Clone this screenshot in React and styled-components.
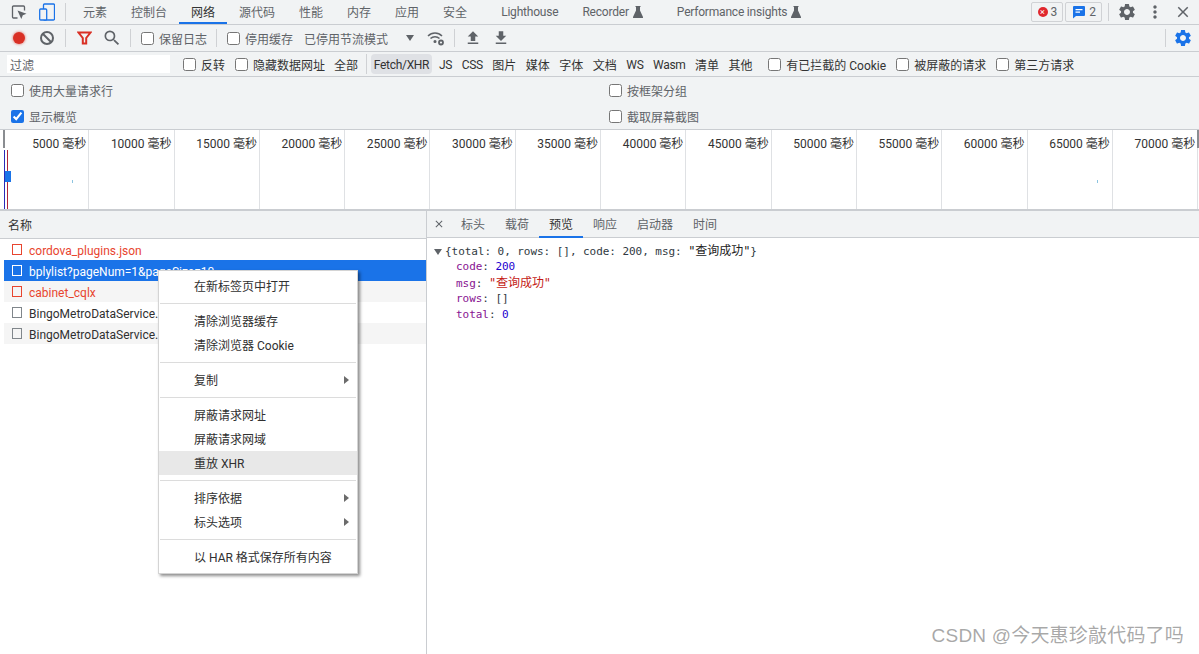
import styled, { createGlobalStyle } from 'styled-components';
import { MdSettings, MdClose, MdSearch, MdMoreVert } from 'react-icons/md';

const uiFont = `Roboto, "Noto Sans CJK SC", sans-serif`;
const borderColor = '#cacdd1';

const panelTabs = ['元素', '控制台', '网络', '源代码', '性能', '内存', '应用', '安全'];
const filterTypes = ['JS', 'CSS', '图片', '媒体', '字体', '文档', 'WS', 'Wasm', '清单', '其他'];
const ticks = [5000, 10000, 15000, 20000, 25000, 30000, 35000, 40000, 45000, 50000, 55000, 60000, 65000, 70000];
const detailTabs = ['标头', '载荷', '预览', '响应', '启动器', '时间'];
const requests = [
	{ name: 'cordova_plugins.json', failed: true },
	{ name: 'bplylist?pageNum=1&pageSize=10', selected: true },
	{ name: 'cabinet_cqlx', failed: true, striped: true },
	{ name: 'BingoMetroDataService.' },
	{ name: 'BingoMetroDataService.', striped: true },
];
const menuGroups = [
	[{ label: '在新标签页中打开' }],
	[{ label: '清除浏览器缓存' }, { label: '清除浏览器 Cookie' }],
	[{ label: '复制', sub: true }],
	[{ label: '屏蔽请求网址' }, { label: '屏蔽请求网域' }, { label: '重放 XHR', hover: true }],
	[{ label: '排序依据', sub: true }, { label: '标头选项', sub: true }],
	[{ label: '以 HAR 格式保存所有内容' }],
];

const isLatin = (text) => /^[A-Za-z/]+$/.test(text);

export default function App() {
	return (
		<>
			<GlobalStyle />
			<Page>
				<Toolbar $height={25}>
					<IconButton>
						<svg width="16" height="16" viewBox="0 0 16 16" fill="none">
							<path d="M6.500 14H2.500A1 1 0 0 1 1.500 13V3a1 1 0 0 1 1-1h10a1 1 0 0 1 1 1v3.500" stroke="#5f6368" strokeWidth="1.300" />
							<path d="M6.500 6.500l9 3.300-3.700 1.500-1.500 3.700z" fill="#5f6368" />
						</svg>
					</IconButton>
					<IconButton>
						<svg width="16" height="18" viewBox="0 0 16 18" fill="none" stroke="#1a73e8" strokeWidth="1.300">
							<rect x="4.500" y="1" width="11" height="16" rx="1" />
							<rect x="0.700" y="6" width="7" height="11" rx="1" fill="#f1f3f4" />
						</svg>
					</IconButton>
					<Divider />
					<Tabs>
						{panelTabs.map((tab) => (
							<PanelTab key={tab} $active={tab === '网络'}>{tab}</PanelTab>
						))}
						<PanelTab $offset={10} $latin>Lighthouse</PanelTab>
						<PanelTab $latin>Recorder<Flask /></PanelTab>
						<PanelTab $offset={10} $latin>Performance insights<Flask /></PanelTab>
					</Tabs>
					<Spacer />
					<Counter>
						<ErrorDot>×</ErrorDot>3
					</Counter>
					<Counter>
						<svg width="14" height="14" viewBox="0 0 14 14">
							<path d="M1 2a1 1 0 0 1 1-1h10a1 1 0 0 1 1 1v8a1 1 0 0 1-1 1H4l-3 2.500z" fill="#1a73e8" />
							<path d="M3.500 4h7v1.200h-7zM3.500 6.500h4.500v1.200H3.500z" fill="#fff" />
						</svg>
						2
					</Counter>
					<Divider $gap={4} />
					<IconButton><MdSettings size={20} color="#5f6368" /></IconButton>
					<IconButton><MdMoreVert size={20} color="#5f6368" /></IconButton>
					<IconButton><MdClose size={18} color="#5f6368" /></IconButton>
					<EndGap />
				</Toolbar>

				<Toolbar $height={27}>
					<IconButton>
						<RecordDot />
					</IconButton>
					<IconButton>
						<svg width="16" height="16" viewBox="0 0 16 16" fill="none" stroke="#5f6368" strokeWidth="2">
							<circle cx="8" cy="8" r="6" />
							<path d="M3.800 3.800l8.400 8.400" />
						</svg>
					</IconButton>
					<Divider />
					<IconButton>
						<svg width="15" height="14" viewBox="0 0 15 14" fill="none">
							<path d="M1.500 1.500h12L9.200 7v5.500H5.800V7z" stroke="#d93025" strokeWidth="2" />
						</svg>
					</IconButton>
					<IconButton><MdSearch size={20} color="#5f6368" /></IconButton>
					<Divider />
					<CheckLabel $left={6} $muted>
						<input type="checkbox" />保留日志
					</CheckLabel>
					<Divider $gap={9} />
					<CheckLabel $left={1} $muted>
						<input type="checkbox" />停用缓存
					</CheckLabel>
					<Throttle>已停用节流模式</Throttle>
					<Caret />
					<IconButton $wide>
						<svg width="18" height="15" viewBox="0 0 18 15" fill="none" stroke="#5f6368" strokeWidth="1.500">
							<path d="M1 5C5 1 11 1 15 5" />
							<path d="M3.500 7.500C6 5 10 5 12.500 7.500" />
							<circle cx="8" cy="10.500" r="0.800" fill="#5f6368" />
							<circle cx="14" cy="11.500" r="2" strokeWidth="1.800" />
						</svg>
					</IconButton>
					<Divider $gap={2} />
					<IconButton $inset>
						<svg width="18" height="18" viewBox="0 0 24 24" fill="#5f6368">
							<path d="M9 16h6v-6h4l-7-7-7 7h4zm-4 2h14v2H5z" />
						</svg>
					</IconButton>
					<IconButton>
						<svg width="18" height="18" viewBox="0 0 24 24" fill="#5f6368">
							<path d="M19 9h-4V3H9v6H5l7 7 7-7zM5 18v2h14v-2H5z" />
						</svg>
					</IconButton>
					<Spacer />
					<Divider $gap={3} />
					<IconButton><MdSettings size={20} color="#1a73e8" /></IconButton>
					<EndGap />
				</Toolbar>

				<FilterBar>
					<FilterInput>过滤</FilterInput>
					<CheckLabel $left={13}>
						<input type="checkbox" />反转
					</CheckLabel>
					<CheckLabel $left={10}>
						<input type="checkbox" />隐藏数据网址
					</CheckLabel>
					<TypeChip $first>全部</TypeChip>
					<Divider $gap={3} $short />
					<TypeChip $active $flush $latin>Fetch/XHR</TypeChip>
					{filterTypes.map((type) => (
						<TypeChip key={type} $latin={isLatin(type)}>{type}</TypeChip>
					))}
					<CheckLabel $left={11}>
						<input type="checkbox" />有已拦截的 Cookie
					</CheckLabel>
					<CheckLabel $left={10}>
						<input type="checkbox" />被屏蔽的请求
					</CheckLabel>
					<CheckLabel $left={10}>
						<input type="checkbox" />第三方请求
					</CheckLabel>
				</FilterBar>

				<Settings>
					<CheckLabel $muted>
						<input type="checkbox" />使用大量请求行
					</CheckLabel>
					<CheckLabel $muted>
						<input type="checkbox" />按框架分组
					</CheckLabel>
					<CheckLabel $muted>
						<input type="checkbox" defaultChecked />显示概览
					</CheckLabel>
					<CheckLabel $muted>
						<input type="checkbox" />截取屏幕截图
					</CheckLabel>
				</Settings>

				<Overview>
					{ticks.map((tick) => (
						<Tick key={tick}>{tick} 毫秒</Tick>
					))}
					<Handle $side="left" />
					<Handle $side="right" />
					<Marker $x={4} $color="#2a2ab8" />
					<Marker $x={7} $color="#b0243a" />
					<Activity />
					<Blip $x={72} $y={180} />
					<Blip $x={1097} $y={180} />
				</Overview>

				<Split>
					<ListPane>
						<ListHeader>名称</ListHeader>
						<Rows>
							{requests.map((req, i) => (
								<Row key={i} $striped={req.striped} $selected={req.selected} $failed={req.failed}>
									<FileIcon />
									<RowName>{req.name}</RowName>
								</Row>
							))}
						</Rows>
					</ListPane>

					<DetailPane>
						<DetailTabs>
							<CloseButton><MdClose size={12} color="#5f6368" /></CloseButton>
							{detailTabs.map((tab) => (
								<DetailTab key={tab} $active={tab === '预览'}>{tab}</DetailTab>
							))}
						</DetailTabs>
						<JsonTree>
							<JsonLine>
								<Twisty />
								{'{total: 0, rows: [], code: 200, msg: '}<Cjk>"查询成功"</Cjk>{'}'}
							</JsonLine>
							<JsonLine $nested><Prop>code</Prop>: <Num>200</Num></JsonLine>
							<JsonLine $nested><Prop>msg</Prop>: <Cjk $string>"查询成功"</Cjk></JsonLine>
							<JsonLine $nested><Prop>rows</Prop>: []</JsonLine>
							<JsonLine $nested><Prop>total</Prop>: <Num>0</Num></JsonLine>
						</JsonTree>
					</DetailPane>
				</Split>

				<Menu>
					{menuGroups.map((group, i) => (
						<MenuGroup key={i}>
							{group.map((item) => (
								<MenuItem key={item.label} $hover={item.hover}>
									{item.label}
									{item.sub && <SubArrow />}
								</MenuItem>
							))}
						</MenuGroup>
					))}
				</Menu>

				<Watermark>CSDN @今天惠珍敲代码了吗</Watermark>
			</Page>
		</>
	);
}

function Flask() {
	return (
		<FlaskIcon width="10" height="12" viewBox="0 0 10 12">
			<path d="M2.500 0h5v1H7v3.500l3 6.500a.7.700 0 0 1-.6 1H.6a.7.700 0 0 1-.6-1l3-6.500V1h-.5z" fill="#5f6368" />
		</FlaskIcon>
	);
}

const GlobalStyle = createGlobalStyle`
	html, body {
		margin: 0;
		padding: 0;
		background: #fff;
		overflow: hidden;
	}
	body {
		font-family: ${uiFont};
		font-size: 12px;
	}
	input[type='checkbox'] {
		width: 13px;
		height: 13px;
		margin: 0;
		accent-color: #1a73e8;
	}
`;

const Page = styled.div`
	position: relative;
	width: 1199px;
	height: 654px;
	display: flex;
	flex-direction: column;
	overflow: hidden;
`;

const Toolbar = styled.div`
	height: ${(p) => p.$height}px;
	box-sizing: border-box;
	display: flex;
	align-items: center;
	padding-left: 5px;
	background: #f1f3f4;
	border-bottom: 1px solid ${borderColor};
	color: #5f6368;
`;

const IconButton = styled.div`
	width: ${(p) => (p.$wide ? 32 : 28)}px;
	height: 24px;
	margin-left: ${(p) => (p.$inset ? 2 : 0)}px;
	flex: none;
	display: flex;
	align-items: center;
	justify-content: center;
`;

const Divider = styled.div`
	width: 1px;
	height: ${(p) => (p.$short ? 20 : 18)}px;
	margin: 0 ${(p) => p.$gap ?? 4}px;
	flex: none;
	background: #cfd1d4;
`;

const Tabs = styled.div`
	display: flex;
	height: 100%;
	margin-left: 1px;
`;

const PanelTab = styled.div`
	height: 100%;
	box-sizing: border-box;
	padding: ${(p) => (p.$latin ? 2 : 0)}px 12px 0;
	margin-left: ${(p) => p.$offset ?? 0}px;
	display: flex;
	align-items: center;
	gap: 4px;
	letter-spacing: ${(p) => (p.$latin ? -0.2 : 0)}px;
	color: ${(p) => (p.$active ? '#333' : '#5f6368')};
	border-bottom: 2px solid ${(p) => (p.$active ? '#1a73e8' : 'transparent')};
	white-space: nowrap;
`;

const FlaskIcon = styled.svg`
	flex: none;
`;

const Spacer = styled.div`
	flex: 1;
`;

const EndGap = styled.div`
	width: 2px;
	flex: none;
`;

const Counter = styled.div`
	height: 20px;
	box-sizing: border-box;
	margin-right: 2px;
	padding: 0 5px 0 6px;
	display: flex;
	align-items: center;
	gap: 3px;
	border: 1px solid #d0d2d5;
	border-radius: 2px;
	color: #5f6368;
`;

const ErrorDot = styled.span`
	width: 10px;
	height: 10px;
	border-radius: 50%;
	display: flex;
	align-items: center;
	justify-content: center;
	background: #e0282e;
	color: #fff;
	font-size: 9px;
	line-height: 1;
`;

const RecordDot = styled.span`
	width: 12px;
	height: 12px;
	border-radius: 50%;
	background: #d93025;
	box-shadow: 0 0 2px 1px rgba(217, 48, 37, 0.35);
`;

const CheckLabel = styled.label`
	display: inline-flex;
	align-items: center;
	gap: 5px;
	margin-left: ${(p) => p.$left ?? 0}px;
	color: ${(p) => (p.$muted ? '#5f6368' : '#333')};
	white-space: nowrap;
`;

const Throttle = styled.div`
	margin-left: 11px;
	color: #5f6368;
	white-space: nowrap;
`;

const Caret = styled.span`
	width: 0;
	height: 0;
	margin-left: 18px;
	margin-right: 6px;
	border-left: 4px solid transparent;
	border-right: 4px solid transparent;
	border-top: 6px solid #5f6368;
`;

const FilterBar = styled.div`
	height: 25px;
	box-sizing: border-box;
	padding-left: 7px;
	display: flex;
	align-items: center;
	background: #f1f3f4;
	border-bottom: 1px solid ${borderColor};
	color: #333;
`;

const FilterInput = styled.div`
	width: 163px;
	height: 18px;
	box-sizing: border-box;
	padding-left: 3px;
	flex: none;
	line-height: 22px;
	background: #fff;
	color: #5f6368;
`;

const TypeChip = styled.div`
	height: 20px;
	box-sizing: border-box;
	padding: ${(p) => (p.$latin ? 2 : 0)}px 3px 0;
	margin: 0 ${(p) => (p.$flush ? 2 : 1.750)}px 0 ${(p) => (p.$first ? 6 : p.$flush ? 1 : 1.750)}px;
	display: flex;
	align-items: center;
	border-radius: 4px;
	letter-spacing: ${(p) => (p.$latin ? -0.3 : 0)}px;
	background: ${(p) => (p.$active ? '#dfe1e5' : 'transparent')};
	white-space: nowrap;
`;

const Settings = styled.div`
	height: 53px;
	box-sizing: border-box;
	padding-left: 11px;
	display: grid;
	grid-template-rows: 26px 26px;
	grid-template-columns: 598px 1fr;
	align-items: center;
	background: #f1f3f4;
	border-bottom: 1px solid ${borderColor};
`;

const Overview = styled.div`
	position: relative;
	height: 81px;
	box-sizing: border-box;
	padding-left: 4px;
	display: grid;
	grid-template-columns: repeat(14, 85.300px);
	background: #fff;
	border-bottom: 2px solid ${borderColor};
`;

const Tick = styled.div`
	box-sizing: border-box;
	padding: 4px 2px 0 0;
	text-align: right;
	color: #333;
	white-space: nowrap;
	border-right: 1px solid #dfe1e4;
`;

const Handle = styled.div`
	position: absolute;
	top: 0;
	${(p) => p.$side}: ${(p) => (p.$side === 'left' ? 3 : 0)}px;
	width: 2px;
	height: 18px;
	background: #8a8d91;
`;

const Marker = styled.div`
	position: absolute;
	top: 20px;
	bottom: 0;
	left: ${(p) => p.$x}px;
	width: 1px;
	background: ${(p) => p.$color};
`;

const Activity = styled.div`
	position: absolute;
	top: 41px;
	left: 5px;
	width: 6px;
	height: 11px;
	background: #1a73e8;
`;

const Blip = styled.div`
	position: absolute;
	top: ${(p) => p.$y - 130}px;
	left: ${(p) => p.$x}px;
	width: 1px;
	height: 3px;
	background: #8cc4e0;
`;

const Split = styled.div`
	flex: 1;
	display: flex;
	min-height: 0;
`;

const ListPane = styled.div`
	width: 426px;
	flex: none;
	display: flex;
	flex-direction: column;
`;

const ListHeader = styled.div`
	height: 28px;
	box-sizing: border-box;
	padding-left: 8px;
	display: flex;
	align-items: center;
	background: #f1f3f4;
	border-bottom: 1px solid ${borderColor};
	color: #333;
`;

const Rows = styled.div`
	padding-left: 4px;
	flex: 1;
	background: #fff;
`;

const FileIcon = styled.span`
	width: 10px;
	height: 11px;
	box-sizing: border-box;
	flex: none;
	border: 1px solid currentColor;
`;

const RowName = styled.span`
	margin-left: 7px;
	padding-top: 2px;
	white-space: nowrap;
`;

const Row = styled.div`
	height: 21px;
	padding-left: 8px;
	display: flex;
	align-items: center;
	background: ${(p) => (p.$selected ? '#1a73e8' : p.$striped ? '#f5f5f5' : '#fff')};
	color: ${(p) => (p.$selected ? '#fff' : p.$failed ? '#e8452f' : '#303030')};

	${FileIcon} {
		color: ${(p) => (p.$selected ? '#fff' : p.$failed ? '#e8452f' : '#80868b')};
	}
`;

const DetailPane = styled.div`
	flex: 1;
	min-width: 0;
	display: flex;
	flex-direction: column;
	border-left: 1px solid ${borderColor};
`;

const DetailTabs = styled.div`
	height: 27px;
	box-sizing: border-box;
	display: flex;
	background: #f1f3f4;
	border-bottom: 1px solid ${borderColor};
`;

const CloseButton = styled.div`
	width: 24px;
	display: flex;
	align-items: center;
	justify-content: center;
`;

const DetailTab = styled.div`
	padding: 0 10px;
	display: flex;
	align-items: center;
	color: ${(p) => (p.$active ? '#333' : '#5f6368')};
	border-bottom: 2px solid ${(p) => (p.$active ? '#1a73e8' : 'transparent')};
	margin-bottom: -1px;
`;

const JsonTree = styled.div`
	padding: 5px 0 0 18px;
	font-family: "DejaVu Sans Mono", "Noto Sans CJK SC", monospace;
	font-size: 11px;
	letter-spacing: -0.05px;
	line-height: 16px;
	color: #303942;
`;

const JsonLine = styled.div`
	position: relative;
	height: 16px;
	padding-left: ${(p) => (p.$nested ? 11 : 0)}px;
	white-space: pre;
`;

const Twisty = styled.span`
	position: absolute;
	left: -11px;
	top: 6px;
	width: 0;
	height: 0;
	border-left: 4px solid transparent;
	border-right: 4px solid transparent;
	border-top: 6px solid #5f6368;
`;

const Prop = styled.span`
	color: #881391;
`;

const Num = styled.span`
	color: #1c00cf;
`;

const Cjk = styled.span`
	font-size: 12px;
	color: ${(p) => (p.$string ? '#c41a16' : '#222')};
`;

const Menu = styled.div`
	position: absolute;
	left: 158px;
	top: 270px;
	width: 200px;
	box-sizing: border-box;
	padding: 3px 0 4px;
	background: #fff;
	border: 1px solid #d4d4d4;
	box-shadow: 2px 2px 3px rgba(0, 0, 0, 0.45);
	color: #303030;
`;

const MenuGroup = styled.div`
	& + & {
		margin-top: 11px;
		position: relative;
	}
	& + &::before {
		content: '';
		position: absolute;
		left: 1px;
		right: 1px;
		top: -6px;
		height: 1px;
		background: #dcdcdc;
	}
`;

const MenuItem = styled.div`
	position: relative;
	height: 24px;
	box-sizing: border-box;
	padding: 0 0 2px 35px;
	display: flex;
	align-items: center;
	background: ${(p) => (p.$hover ? '#e8e8e8' : 'transparent')};
	white-space: nowrap;
`;

const SubArrow = styled.span`
	position: absolute;
	right: 8px;
	top: 8px;
	width: 0;
	height: 0;
	border-top: 4px solid transparent;
	border-bottom: 4px solid transparent;
	border-left: 5px solid #6b6b6b;
`;

const Watermark = styled.div`
	position: absolute;
	right: 15px;
	bottom: 7px;
	font-family: "Liberation Sans", "Noto Sans CJK SC", sans-serif;
	font-size: 19px;
	letter-spacing: 0.2px;
	color: rgba(110, 110, 110, 0.6);
	white-space: nowrap;
`;
